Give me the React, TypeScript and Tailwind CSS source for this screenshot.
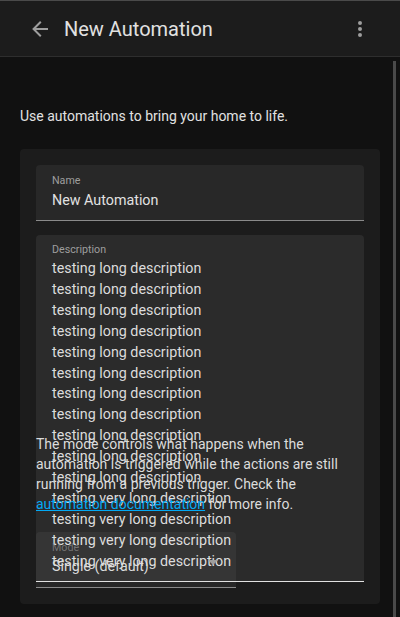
import React from 'react';

const descLines = [
  ...Array(11).fill('testing long description'),
  ...Array(4).fill('testing very long description'),
];

export default function App() {
  return (
    <div className="relative h-[617px] w-[400px] overflow-hidden bg-[#111111] font-['Roboto',sans-serif] text-[#e1e1e1]">
      {/* Toolbar */}
      <div className="flex h-[57px] items-center border-t border-b border-t-[#4a4a4a] border-b-[#2e2e2e] bg-[#1c1c1c] pl-[28px] pr-[28px]">
        <svg width="24" height="24" viewBox="0 0 24 24" className="text-[#9e9e9e]">
          <path fill="currentColor" d="M20 11v2H8l5.5 5.5-1.42 1.42L4.16 12l7.92-7.92L13.5 5.5 8 11h12z" />
        </svg>
        <div className="ml-[12px] flex-1 text-[20px] leading-none text-[#e1e1e1]">New Automation</div>
        <svg width="24" height="24" viewBox="0 0 24 24" className="text-[#9e9e9e]">
          <path fill="currentColor" d="M12 16a2 2 0 1 1 0 4 2 2 0 0 1 0-4zm0-6a2 2 0 1 1 0 4 2 2 0 0 1 0-4zm0-6a2 2 0 1 1 0 4 2 2 0 0 1 0-4z" />
        </svg>
      </div>

      {/* scrollbar thumb */}
      <div className="absolute right-[4px] top-[61px] h-[560px] w-[3px] bg-[#4a4a4a]" />

      <div className="px-[20px] pt-[49px]">
        <p className="text-[14px] leading-[20px]">Use automations to bring your home to life.</p>

        <div className="mt-[23px] rounded-[4px] bg-[#1c1c1c] p-[16px]">
          {/* Name */}
          <div className="h-[56px] rounded-t-[4px] border-b border-[#8a8a8a] bg-[#282828] px-[16px] pt-[10px]">
            <div className="text-[10.7px] leading-[12px] text-[#9e9e9e]">Name</div>
            <div className="mt-[3px] text-[14.3px] leading-[20px]">New Automation</div>
          </div>

          {/* Description */}
          <div className="mt-[14px] h-[347px] rounded-t-[4px] border-b border-[#e1e1e1] bg-[#2b2b2b] px-[16px] pt-[9px]">
            <div className="text-[10.7px] leading-[12px] text-[#9e9e9e]">Description</div>
            <div className="mt-[2px] text-[14.3px] leading-[20.9px] text-[#dcdcdc]">
              {descLines.map((l, i) => (
                <div key={i}>{l}</div>
              ))}
            </div>
          </div>

          {/* Mode (overlapping) */}
          <div className="relative -mt-[148px]">
            <p className="text-[14px] leading-[20px] text-[#dcdcdc]">
              The mode controls what happens when the automation is triggered while the actions are still
              running from a previous trigger. Check the{' '}
              <span className="text-[#03a9f4] underline">automation documentation</span> for more info.
            </p>
            <div className="relative mt-[18px] h-[56px] w-[200px] rounded-t-[4px] border-b border-[#8a8a8a] bg-[#ffffff0d] px-[16px] pt-[10px]">
              <div className="text-[10.7px] leading-[12px] text-[#9e9e9e]/60">Mode</div>
              <div className="mt-[2px] text-[14.3px] leading-[20px] text-[#dcdcdc]">Single (default)</div>
              <svg width="10" height="5" viewBox="0 0 10 5" className="absolute left-[172px] top-[28px] text-[#9e9e9e]">
                <path fill="currentColor" d="M0 0h10L5 5z" />
              </svg>
            </div>
          </div>
        </div>
      </div>
    </div>
  );
}
